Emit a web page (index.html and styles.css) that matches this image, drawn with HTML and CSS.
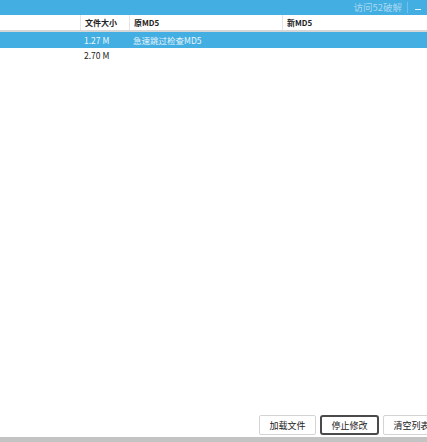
FILE: index.html
```html
<!DOCTYPE html>
<html>
<head>
<meta charset="utf-8">
<link rel="stylesheet" href="styles.css">
</head>
<body>
<div class="window">
  <div class="titlebar">
    <span class="title-link">访问52破解</span>
    <span class="title-sep"></span>
    <span class="title-min"></span>
  </div>
  <div class="table">
    <div class="row head">
      <div class="cell c-name"></div>
      <div class="cell c-size">文件大小</div>
      <div class="cell c-old">原MD5</div>
      <div class="cell c-new">新MD5</div>
    </div>
    <div class="row selected">
      <div class="cell c-name"></div>
      <div class="cell c-size">1.27 M</div>
      <div class="cell c-old">急速跳过检查MD5</div>
      <div class="cell c-new"></div>
    </div>
    <div class="row">
      <div class="cell c-name"></div>
      <div class="cell c-size">2.70 M</div>
      <div class="cell c-old"></div>
      <div class="cell c-new"></div>
    </div>
  </div>
  <div class="actions">
    <button class="btn">加载文件</button>
    <button class="btn focused">停止修改</button>
    <button class="btn">清空列表</button>
  </div>
  <div class="statusbar"></div>
</div>
</body>
</html>
```
FILE: styles.css
```css
html, body {
  margin: 0;
  padding: 0;
  background: #ffffff;
}
body {
  font-family: "Noto Sans CJK SC", "Noto Sans", sans-serif;
  font-size: 8.5px;
  color: #222;
  overflow: hidden;
}
.window {
  width: 427px;
  height: 442px;
  display: flex;
  flex-direction: column;
}
.titlebar {
  height: 15px;
  background: #42aee1;
  display: flex;
  align-items: center;
  justify-content: flex-end;
  padding-right: 6px;
  flex-shrink: 0;
}
.title-link {
  color: #a9d9f2;
  font-size: 9.5px;
  line-height: 15px;
}
.title-sep {
  width: 1px;
  height: 11px;
  background: #6fc2ea;
  margin: 0 7px 0 5px;
}
.title-min {
  width: 6px;
  height: 1px;
  background: #e6f4fb;
  margin-top: 3px;
}
.table {
  flex: 1;
  display: flex;
  flex-direction: column;
}
.row {
  display: flex;
  height: 15px;
  line-height: 15px;
}
.row.head {
  height: 15px;
  border-bottom: 2px solid #d6d6d6;
  font-weight: bold;
  font-size: 8px;
}
.row.head .cell {
  border-right: 1px solid #e4e4e4;
}
.row.selected {
  background: #42aee1;
  color: #e8f5fc;
  height: 16px;
  line-height: 16px;
}
.cell {
  box-sizing: border-box;
  padding-left: 3px;
  white-space: nowrap;
  overflow: hidden;
}
.row.head .cell { padding-left: 4px; }
.c-name { width: 81px; }
.c-size { width: 49px; }
.c-old { width: 153px; }
.c-new { flex: 1; }
.row.head .c-new { border-right: none; }
.actions {
  display: flex;
  gap: 4px;
  padding-left: 259px;
  height: 20px;
  margin-bottom: 2px;
  flex-shrink: 0;
}
.btn {
  width: 57px;
  height: 20px;
  padding: 0;
  margin: 0;
  border: 1px solid #d4d4d4;
  border-radius: 2px;
  background: #ffffff;
  font-family: inherit;
  font-size: 9px;
  color: #222;
  flex-shrink: 0;
}
.btn.focused {
  width: 59px;
  border: 2px solid #4a4a4a;
  border-radius: 3px;
}
.statusbar {
  height: 5px;
  background: #c3c3c3;
  flex-shrink: 0;
}
```
